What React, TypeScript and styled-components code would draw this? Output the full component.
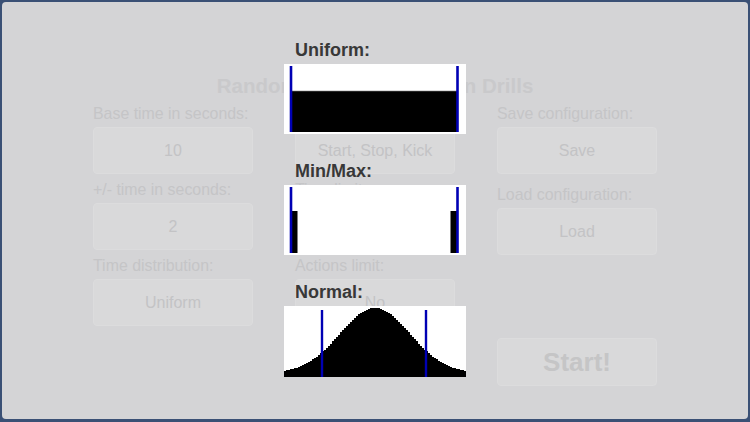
import React from "react";
import styled, {createGlobalStyle} from "styled-components";

const GlobalStyle = createGlobalStyle`
  html, body {
    margin: 0;
    padding: 0;
  }
  body {
    font-family: "Liberation Sans", Arial, sans-serif;
  }
  #root {
    width: 750px;
    height: 422px;
    box-sizing: border-box;
    padding: 2px 2px 3px 2px;
    background-color: #3a5075;
  }
`

const Panel = styled.div`
  position: relative;
  height: 100%;
  box-sizing: border-box;
  padding-top: 72px;
  border-radius: 4px;
  background-color: #d4d4d6;
  overflow: hidden;
`

const Title = styled.h1`
  margin: 0 0 7px 0;
  font-size: 20.5px;
  line-height: 24px;
  font-weight: bold;
  text-align: center;
  color: #c9c9cb;
`

const Columns = styled.div`
  display: grid;
  grid-template-columns: repeat(3, 160px);
  column-gap: 42px;
  justify-content: center;
  align-items: start;
`

const Column = styled.div<{ $gap: number }>`
  display: flex;
  flex-direction: column;
  gap: ${(p) => p.$gap}px;
`

const Field = styled.div`
  display: flex;
  flex-direction: column;
  gap: 4px;
`

const Label = styled.div`
  font-size: 15.9px;
  line-height: 18px;
  color: #c5c5c7;
  white-space: nowrap;
`

const Box = styled.div<{ $big?: boolean }>`
  display: flex;
  align-items: center;
  justify-content: center;
  box-sizing: border-box;
  height: ${(p) => (p.$big ? 48 : 47)}px;
  border: 1px solid #dcdcdd;
  border-radius: 4px;
  background-color: #d9d9da;
  color: ${(p) => (p.$big ? "#c5c5c6" : "#c3c3c5")};
  font-size: ${(p) => (p.$big ? 26 : 16)}px;
  font-weight: ${(p) => (p.$big ? "bold" : "normal")};
`

const StartBox = styled(Box)`
  margin-top: 71px;
`

const Overlay = styled.div`
  position: absolute;
  left: 282px;
  top: 38px;
  width: 182px;
  display: flex;
  flex-direction: column;
  gap: 27px;
`

const ChartBlock = styled.div`
  display: flex;
  flex-direction: column;
  gap: 4px;
`

const ChartLabel = styled.div`
  padding-left: 11px;
  font-size: 18px;
  line-height: 20px;
  font-weight: bold;
  color: #383838;
`

const ChartBox = styled.div<{ $h: number }>`
  width: 182px;
  height: ${(p) => p.$h}px;
  background-color: #ffffff;

  svg {
    display: block;
  }
`

const BLUE = "#0000b4";

// stepped gaussian like a pixel plot
const normalPath = () => {
    const H = 71;
    let d = `M0,${H}`;
    for (let x = 0; x < 182; x += 2) {
        const dx = x + 1 - 91;
        const h = 4 + 65 * Math.exp(-(dx * dx) / (2 * 35 * 35));
        const y = H - Math.round(h);
        d += ` L${x},${y} L${x + 2},${y}`;
    }
    return d + ` L182,${H} Z`;
}

const UniformChart = () => (
    <ChartBox $h={70}>
        <svg width="182" height="70" viewBox="0 0 182 70">
            <rect x="7" y="27" width="166.5" height="41" fill="#000" />
            <line x1="7" y1="27" x2="173.5" y2="27" stroke="#888" strokeWidth="0.6" />
            <line x1="7" y1="2" x2="7" y2="68" stroke={BLUE} strokeWidth="2.6" />
            <line x1="173.5" y1="2" x2="173.5" y2="68" stroke={BLUE} strokeWidth="2.6" />
        </svg>
    </ChartBox>
)

const MinMaxChart = () => (
    <ChartBox $h={70}>
        <svg width="182" height="70" viewBox="0 0 182 70">
            <rect x="7" y="26" width="6.5" height="42" fill="#000" />
            <rect x="166.5" y="26" width="7" height="42" fill="#000" />
            <line x1="7" y1="2" x2="7" y2="68" stroke={BLUE} strokeWidth="2.6" />
            <line x1="173.5" y1="2" x2="173.5" y2="68" stroke={BLUE} strokeWidth="2.6" />
        </svg>
    </ChartBox>
)

const NormalChart = () => (
    <ChartBox $h={71}>
        <svg width="182" height="71" viewBox="0 0 182 71">
            <path d={normalPath()} fill="#000" />
            <line x1="38" y1="4" x2="38" y2="71" stroke={BLUE} strokeWidth="2.4" />
            <line x1="142" y1="4" x2="142" y2="71" stroke={BLUE} strokeWidth="2.4" />
        </svg>
    </ChartBox>
)

const App = () => {
    return (
        <>
            <GlobalStyle />
            <Panel>
                <Title>Random Football Reaction Drills</Title>
                <Columns>
                    <Column $gap={7}>
                        <Field>
                            <Label>Base time in seconds:</Label>
                            <Box>10</Box>
                        </Field>
                        <Field>
                            <Label>+/- time in seconds:</Label>
                            <Box>2</Box>
                        </Field>
                        <Field>
                            <Label>Time distribution:</Label>
                            <Box>Uniform</Box>
                        </Field>
                    </Column>
                    <Column $gap={7}>
                        <Field>
                            <Label>Actions:</Label>
                            <Box>Start, Stop, Kick</Box>
                        </Field>
                        <Field>
                            <Label>Time limit:</Label>
                            <Box>No</Box>
                        </Field>
                        <Field>
                            <Label>Actions limit:</Label>
                            <Box>No</Box>
                        </Field>
                    </Column>
                    <Column $gap={12}>
                        <Field>
                            <Label>Save configuration:</Label>
                            <Box>Save</Box>
                        </Field>
                        <Field>
                            <Label>Load configuration:</Label>
                            <Box>Load</Box>
                        </Field>
                        <StartBox $big>Start!</StartBox>
                    </Column>
                </Columns>
                <Overlay>
                    <ChartBlock>
                        <ChartLabel>Uniform:</ChartLabel>
                        <UniformChart />
                    </ChartBlock>
                    <ChartBlock>
                        <ChartLabel>Min/Max:</ChartLabel>
                        <MinMaxChart />
                    </ChartBlock>
                    <ChartBlock>
                        <ChartLabel>Normal:</ChartLabel>
                        <NormalChart />
                    </ChartBlock>
                </Overlay>
            </Panel>
        </>
    )
}

export default App;
